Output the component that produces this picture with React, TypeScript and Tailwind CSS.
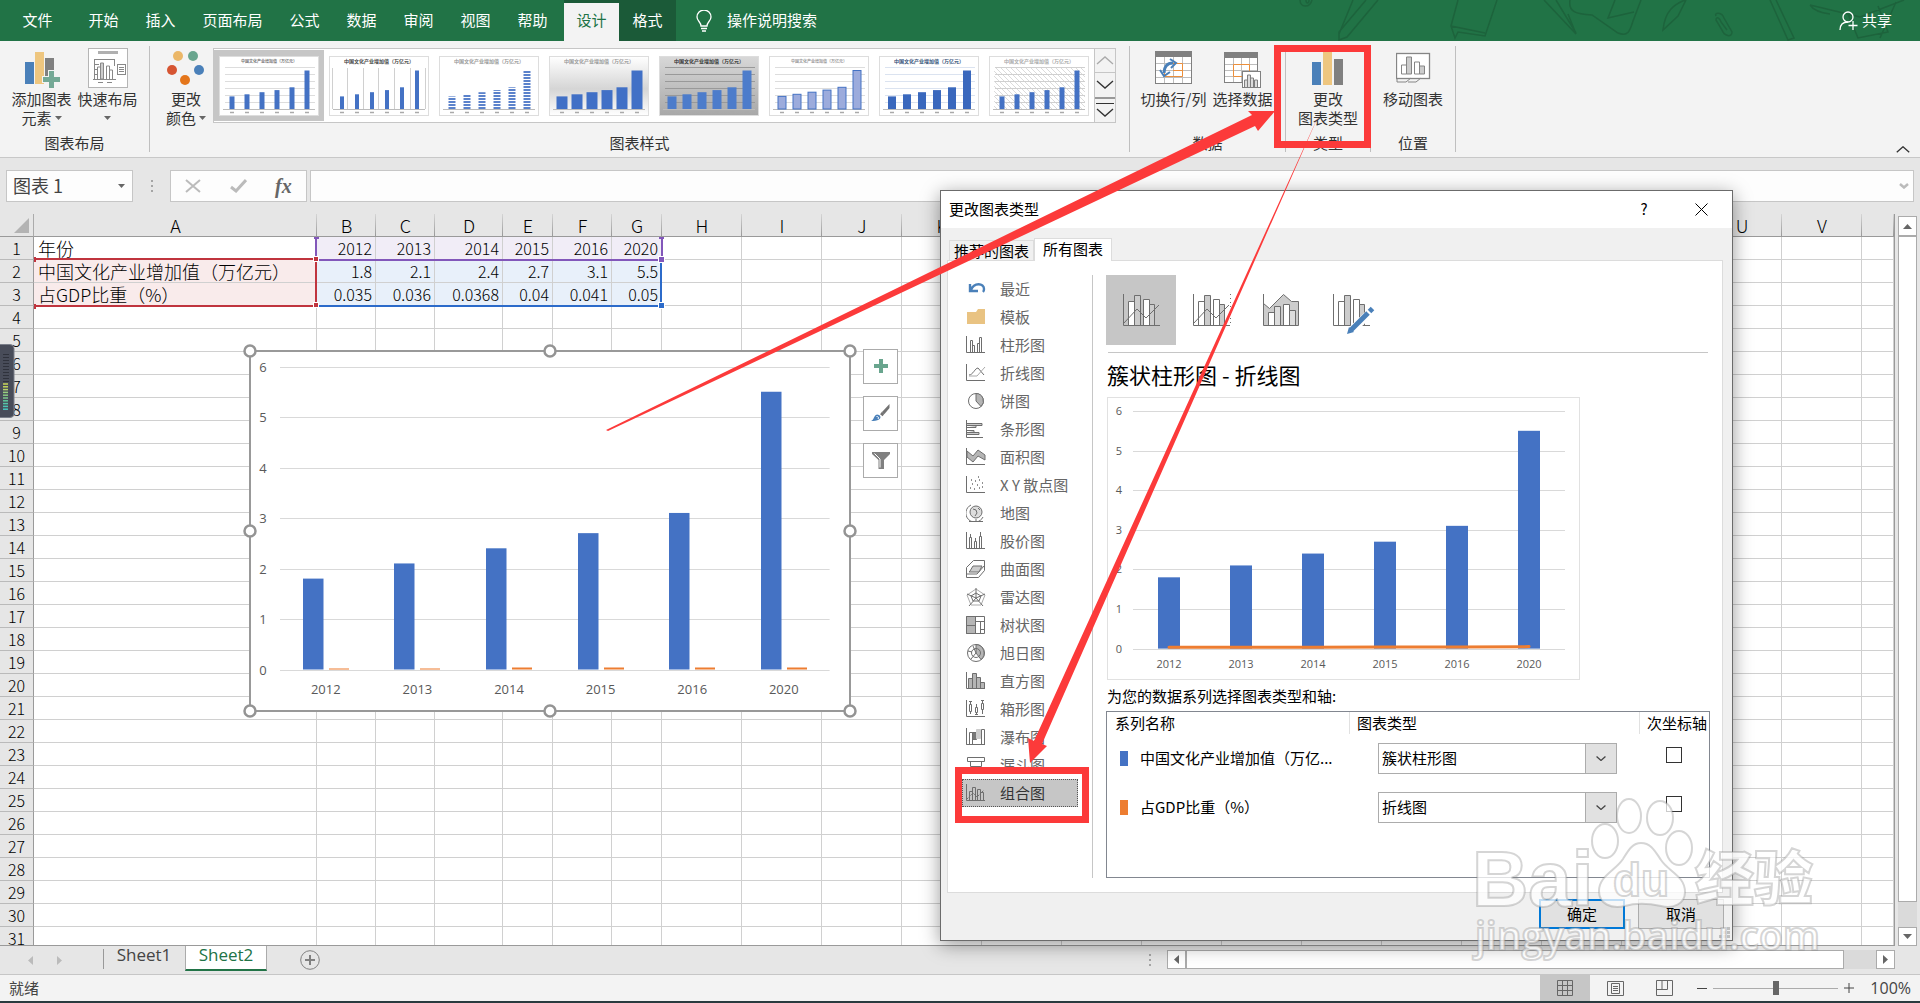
import { useState } from 'react';
import type { ReactNode } from 'react';

const YEARS = ['2012', '2013', '2014', '2015', '2016', '2020'];
const VALUES = [1.8, 2.1, 2.4, 2.7, 3.1, 5.5];
const RATIOS = [0.035, 0.036, 0.0368, 0.04, 0.041, 0.05];
const CHART_TITLE = '中国文化产业增加值（万亿元）';

const COLUMNS = [
  { name: 'A', width: 'w-[283px]' },
  { name: 'B', width: 'w-[59px]' },
  { name: 'C', width: 'w-[59px]' },
  { name: 'D', width: 'w-[68px]' },
  { name: 'E', width: 'w-[50px]' },
  { name: 'F', width: 'w-[59px]' },
  { name: 'G', width: 'w-[50px]' },
  ...'HIJKLMNOPQRSTUV'.split('').map((name) => ({ name, width: 'w-[80px]' })),
  { name: '', width: '' },
];

const ROWS: string[][] = [
  ['年份', ...YEARS],
  [CHART_TITLE, ...VALUES.map(String)],
  ['占GDP比重（%）', ...RATIOS.map(String)],
];

const MENU_TABS = ['开始', '插入', '页面布局', '公式', '数据', '审阅', '视图', '帮助'];

/* ---------- Iconos pequeños ---------- */

function Caret({ className = '' }: { className?: string }) {
  return (
    <svg className={className} width="7" height="4" viewBox="0 0 7 4">
      <path d="M0 0h7L3.5 4z" fill="#666" />
    </svg>
  );
}

function Chevron({ up = false, color = '#333', size = 18 }: { up?: boolean; color?: string; size?: number }) {
  return (
    <svg width={size} height={size / 2} viewBox="0 0 18 9" fill="none" stroke={color} strokeWidth={24 / size}>
      <path d={up ? 'M1 8l8-7 8 7' : 'M1 1l8 7 8-7'} />
    </svg>
  );
}

function AddElementIcon() {
  return (
    <svg width="36" height="40" viewBox="0 -2 36 40">
      <rect x="1" y="12" width="9" height="22" fill="#4a80b9" />
      <rect x="11" y="2" width="9" height="32" fill="#eec67f" />
      <rect x="21" y="8" width="9" height="18" fill="#808080" />
      <path d="M24 20h7v6h6v7h-6v6h-7v-6h-6v-7h6z" fill="#f3f3f3" />
      <path d="M25 21h5v6h6v5h-6v6h-5v-6h-6v-5h6z" fill="#74a996" />
    </svg>
  );
}

function QuickLayoutIcon() {
  return (
    <svg width="40" height="40" viewBox="0 0 40 40" fill="none" stroke="#888">
      <rect x="0.5" y="0.5" width="39" height="39" fill="#fff" stroke="#b5b5b5" />
      <rect x="10" y="3" width="20" height="3" fill="#b0b0b0" stroke="none" />
      <path d="M6.500 11v21M5 31.500h23M6 11.500h20M7 16.500h4M7 21.500h3M7 26.500h3M26.500 11v7M10 34.500h5M19 34.500h5" />
      <path d="M9.500 31v-12h3v12M18.500 31v-13h3v13M21.500 31v-9h3v9" fill="#fff" />
      <path d="M12.500 31v-16h3v16z" fill="#ccc" />
      <rect x="29.500" y="16.500" width="8" height="10" fill="#fff" />
      <path d="M31 19.500h5M31 21.500h5M31 23.500h5" />
    </svg>
  );
}

function PaletteIcon() {
  return (
    <svg width="38" height="40" viewBox="0 -2 38 40">
      <circle cx="11" cy="6" r="5" fill="#ebb768" />
      <circle cx="26" cy="6" r="5" fill="#69a58e" />
      <circle cx="5" cy="20" r="5" fill="#d65532" />
      <circle cx="32" cy="20" r="5" fill="#4a80b9" />
      <circle cx="18" cy="30" r="5" fill="#e4761b" />
    </svg>
  );
}

function SwitchRowColIcon() {
  return (
    <svg width="38" height="40" viewBox="0 -3 38 40" fill="none">
      <rect x="0.500" y="0.500" width="36" height="32" fill="#fff" stroke="#808080" />
      <rect width="37" height="6" fill="#808080" />
      <path d="M1 12.500h35M1 19.500h35M1 26.500h35M9.500 6v26M18.500 6v26M27.500 6v26" stroke="#bdbdbd" />
      <path d="M18 12.500h9.500v13H9.500v-6M18 19.500h9" stroke="#ec8f3b" />
      <path d="M9 22c0-6 3-10 9-10" stroke="#4a80b9" strokeWidth="3" />
      <path d="M15 8l6 4-5 5M5 19l4 6 6-4" stroke="#4a80b9" strokeWidth="2" />
    </svg>
  );
}

function SelectDataIcon() {
  return (
    <svg width="38" height="40" viewBox="0 -4 38 40" fill="none">
      <rect x="0.500" y="0.500" width="33" height="30" fill="#fff" stroke="#808080" />
      <rect width="34" height="6" fill="#808080" />
      <path d="M1 12.500h32M1 18.500h32M1 24.500h32M9.500 6v24M17.500 6v24M25.500 6v24" stroke="#bdbdbd" />
      <path d="M9.500 12.500h16v12h-16z" stroke="#ec8f3b" />
      <rect x="18.500" y="19.500" width="18" height="16" fill="#fff" stroke="#808080" />
      <path d="M20.500 35v-7h3v7M23.500 35v-12h3v12M26.500 35v-9h3v9M30.500 35v-7h3v7" stroke="#808080" fill="#ddd" />
    </svg>
  );
}

function ChangeTypeIcon() {
  return (
    <svg width="32" height="40" viewBox="0 -4 32 40">
      <rect x="0" y="10" width="9" height="23" fill="#4a80b9" />
      <rect x="11" y="0" width="9" height="33" fill="#eec67f" />
      <rect x="22" y="7" width="9" height="26" fill="#808080" />
    </svg>
  );
}

function MoveChartIcon() {
  return (
    <svg width="35" height="40" viewBox="0 -5 35 40" fill="#fff" stroke="#858585">
      <rect x="0.500" y="0.500" width="33" height="25" strokeWidth="1.300" />
      <path d="M5.500 21v-9h5v9zM18.500 21v-12h5v12z" />
      <path d="M10.500 21v-17h5v17zM23.500 21v-8h5v8z" fill="#ccc" />
      <path d="M1 25v4h9l5-4M12 29h8l5-4" fill="none" />
    </svg>
  );
}

/* ---------- Cinta de opciones ---------- */

function TitleBar() {
  return (
    <header className="relative flex h-[41px] shrink-0 items-stretch bg-[#217346] text-[15px] text-white">
      <svg className="absolute right-0 top-0" width="640" height="41" fill="none" stroke="#1d633c" strokeWidth="1.500">
        <path d="M20 0c0 8 10 8 12 0M26 0c0 4 3 4 3 0M86 0l-27 32 0 8 8-3 31-37M73 0l-14 34M178 0l-7 26 4 12 3-6 27 4 12-36M171 26l34 7M264 0l32 34-8-20M276 0l20 33M290 0c-2 12 6 14 22 15l26 18c10 4 12-2 15-12l8-21M335 0l-7 18 26-6M405 0c-10 4-20 10-22 30l15-14 8-16M436 16c-2-4 6-4 8 2l8 14c0 6-8 4-10-2l-6-10c0-4 4-2 5 2l6 8M490 0l18 40 6-2-18-38M530 5l50 12 44-17M530 5c4 6 12 8 20 9M568 14l10 24 30-6-10-26M600 38l16-36" />
      </svg>
      <nav className="relative flex items-stretch">
        <button className="w-[75px]">文件</button>
        {MENU_TABS.map((tab) => (
          <button key={tab} className={tab.length > 2 ? 'w-[87px]' : 'w-[57px]'}>
            {tab}
          </button>
        ))}
      </nav>
      <div className="relative ml-[3px] flex bg-[#1b5a38] pt-[3px]">
        <button className="w-[55px] bg-[#f3f3f3] pb-[3px] text-[#217346]">设计</button>
        <button className="w-[57px] pb-[3px]">格式</button>
      </div>
      <button className="relative flex items-center gap-[15px] pl-5">
        <svg width="16" height="22" viewBox="0 0 16 22" fill="none" stroke="#fff" strokeWidth="1.300">
          <path d="M5 16c0-4-4-5-4-9a7 7 0 0 1 14 0c0 4-4 5-4 9zM5 18.500h6M6 21h4" />
        </svg>
        操作说明搜索
      </button>
      <button className="relative ml-auto flex items-center gap-1 pr-7">
        <svg width="19" height="20" viewBox="0 0 19 20" fill="none" stroke="#fff" strokeWidth="1.300">
          <circle cx="9" cy="6" r="5" />
          <path d="M1 19c0-5 3-8 8-8M14 10v9M9.500 14.500h9" />
        </svg>
        共享
      </button>
    </header>
  );
}

type ThumbStyle = {
  title: string;
  size: number;
  bg: string;
  grid: string;
  fill: string;
  stroke?: string;
  bar: number;
  vertical?: boolean;
};

const THUMBS: ThumbStyle[] = [
  { title: '#777', size: 4, bg: '#fff', grid: '#ddd', fill: '#4472c4', bar: 5 },
  { title: '#444', size: 5, bg: '#fff', grid: '#d0d0d0', fill: '#4472c4', bar: 4, vertical: true },
  { title: '#999', size: 5, bg: '#fff', grid: 'none', fill: 'url(#stripes)', bar: 7 },
  { title: '#999', size: 5, bg: 'url(#haze)', grid: 'none', fill: '#4170c6', bar: 11 },
  { title: '#333', size: 5, bg: 'url(#shade)', grid: '#999', fill: '#4c7ccb', bar: 9 },
  { title: '#999', size: 4, bg: '#fff', grid: '#ddd', fill: '#9cabdc', stroke: '#4472c4', bar: 8 },
  { title: '#345078', size: 5, bg: '#fff', grid: '#dbe3f0', fill: '#3a68bd', bar: 8 },
  { title: '#aaa', size: 5, bg: '#fff', grid: '#d0d0d0', fill: '#4472c4', bar: 5 },
];

function Thumb({ style, hatched }: { style: ThumbStyle; hatched: boolean }) {
  return (
    <svg width="100" height="60" viewBox="0 0 100 60">
      <rect x="0.500" y="0.500" width="99" height="59" fill={style.bg} stroke="#ddd" />
      {hatched && <rect x="5" y="12" width="91" height="41" fill="url(#hatch)" />}
      {!style.vertical &&
        [11, 18, 25, 32, 39, 46].map((y) => <path key={y} d={`M6 ${y + 0.5}h90`} stroke={style.grid} />)}
      {style.vertical &&
        [3, 18, 34, 49, 65, 81, 96].map((x) => <path key={x} d={`M${x + 0.5} 12v41`} stroke={style.grid} />)}
      <path d="M4 53.500h92" stroke="#bbb" />
      <text x="50" y="7" textAnchor="middle" fontSize={style.size} fontWeight="bold" fill={style.title}>
        {CHART_TITLE}
      </text>
      {VALUES.map((value, i) => (
        <g key={YEARS[i]}>
          <rect
            x={13 + i * 15 - style.bar / 2}
            y={53 - value * 7}
            width={style.bar}
            height={value * 7}
            fill={style.fill}
            stroke={style.stroke}
          />
          <path d={`M${11 + i * 15} 56.500h4`} stroke="#aaa" strokeWidth="1.500" />
        </g>
      ))}
    </svg>
  );
}

function StyleGallery() {
  const [selected, setSelected] = useState(0);

  return (
    <div className="flex h-[75px] border border-[#c6c6c6] bg-white">
      <svg className="absolute" width="0" height="0">
        <defs>
          <pattern id="stripes" width="4" height="3" patternUnits="userSpaceOnUse">
            <rect width="4" height="2" fill="#5b82cb" />
          </pattern>
          <pattern id="hatch" width="5" height="5" patternUnits="userSpaceOnUse">
            <path d="M0 0l5 5" stroke="#ccc" strokeWidth="0.700" />
          </pattern>
          <linearGradient id="haze" x1="0" y1="0" x2="0" y2="1">
            <stop offset="0" stopColor="#fff" />
            <stop offset="0.550" stopColor="#d5d5d5" />
            <stop offset="1" stopColor="#fff" />
          </linearGradient>
          <linearGradient id="shade" x1="0" y1="0" x2="0" y2="1">
            <stop offset="0" stopColor="#d8d8d8" />
            <stop offset="1" stopColor="#a8a8a8" />
          </linearGradient>
        </defs>
      </svg>
      {THUMBS.map((style, i) => (
        <button
          key={i}
          onClick={() => setSelected(i)}
          aria-label={`样式 ${i + 1}`}
          className={`my-px flex w-[110px] items-center justify-center ${selected === i ? 'bg-[#c6c6c6]' : ''}`}
        >
          <Thumb style={style} hatched={i === 7} />
        </button>
      ))}
      <div className="flex w-[21px] flex-col border-l border-[#c6c6c6] bg-[#f3f3f3]">
        <button aria-label="上一行" className="flex flex-1 items-center justify-center border-b border-[#c6c6c6]">
          <Chevron up color="#aaa" />
        </button>
        <button aria-label="下一行" className="flex flex-1 items-center justify-center border-b-2 border-[#999]">
          <Chevron />
        </button>
        <button aria-label="其他" className="flex flex-1 flex-col items-center justify-center gap-1">
          <span className="h-px w-[18px] bg-[#333]" />
          <Chevron />
        </button>
      </div>
    </div>
  );
}

function RibbonButton({ icon, lines, caret, width }: { icon: ReactNode; lines: string[]; caret?: boolean; width: string }) {
  return (
    <button className={`flex flex-col items-center text-[15px] leading-[19px] text-[#333] ${width}`}>
      <span className="flex h-[43px] items-end pb-px">{icon}</span>
      {lines.map((line, i) => (
        <span key={i} className="flex h-[19px] items-center gap-[3px] whitespace-nowrap">
          {line}
          {caret && i === lines.length - 1 && <Caret />}
        </span>
      ))}
    </button>
  );
}

function RibbonGroup({ label, width, children }: { label: string; width: string; children: ReactNode }) {
  return (
    <section className={`flex flex-col border-r border-[#bfbfbf] ${width}`}>
      <div className="flex h-[90px] justify-center">{children}</div>
      <p className="text-center text-[15px] leading-[19px] text-[#333]">{label}</p>
    </section>
  );
}

function Ribbon() {
  return (
    <div className="flex h-[117px] shrink-0 justify-between border-b border-[#c8c8c8] bg-[#f3f3f3]">
      <div className="flex py-[5px]">
        <RibbonGroup label="图表布局" width="w-[150px]">
          <RibbonButton width="w-[66px]" icon={<AddElementIcon />} lines={['添加图表', '元素']} caret />
          <RibbonButton width="w-[66px]" icon={<QuickLayoutIcon />} lines={['快速布局', '']} caret />
        </RibbonGroup>
        <RibbonGroup label="图表样式" width="w-[980px]">
          <div className="flex flex-1 pl-[9px]">
            <RibbonButton width="w-[54px]" icon={<PaletteIcon />} lines={['更改', '颜色']} caret />
            <div className="pt-[2px]">
              <StyleGallery />
            </div>
          </div>
        </RibbonGroup>
        <RibbonGroup label="数据" width="w-[156px]">
          <RibbonButton width="w-[70px]" icon={<SwitchRowColIcon />} lines={['切换行/列']} />
          <RibbonButton width="w-[68px]" icon={<SelectDataIcon />} lines={['选择数据']} />
        </RibbonGroup>
        <RibbonGroup label="类型" width="w-[85px]">
          <RibbonButton width="w-[70px]" icon={<ChangeTypeIcon />} lines={['更改', '图表类型']} />
        </RibbonGroup>
        <RibbonGroup label="位置" width="w-[85px]">
          <RibbonButton width="w-[70px]" icon={<MoveChartIcon />} lines={['移动图表']} />
        </RibbonGroup>
      </div>
      <button aria-label="折叠功能区" className="flex items-end px-[10px] pb-1">
        <Chevron up size={14} />
      </button>
    </div>
  );
}

function FormulaBar() {
  return (
    <div className="flex h-[56px] shrink-0 items-start bg-[#e6e6e6] pl-[6px] pr-[6px] pt-3">
      <div className="relative">
        <input
          aria-label="名称框"
          defaultValue="图表 1"
          className="h-[32px] w-[127px] border border-[#c6c6c6] bg-[#fdfdfd] pb-[2px] pl-[6px] text-lg text-[#444]"
        />
        <Caret className="absolute right-2 top-[14px]" />
      </div>
      <div className="flex h-[32px] w-[37px] flex-col items-center justify-center gap-[3px]">
        <span className="size-[2px] bg-[#a5a5a5]" />
        <span className="size-[2px] bg-[#a5a5a5]" />
        <span className="size-[2px] bg-[#a5a5a5]" />
      </div>
      <div className="flex h-[32px] w-[137px] items-center justify-around border border-[#c6c6c6] bg-[#fdfdfd]">
        <button aria-label="取消输入">
          <svg width="16" height="14" viewBox="0 0 16 14" fill="none" stroke="#bbb" strokeWidth="2">
            <path d="M1 1l14 12M15 1L1 13" />
          </svg>
        </button>
        <button aria-label="输入">
          <svg width="17" height="14" viewBox="0 0 17 14" fill="none" stroke="#bbb" strokeWidth="3">
            <path d="M1 8l5 4L16 1" />
          </svg>
        </button>
        <button className="font-['Liberation_Serif',serif] text-xl font-bold italic leading-6 text-[#666]">fx</button>
      </div>
      <div className="relative ml-[3px] flex-1">
        <input aria-label="编辑栏" className="h-[32px] w-full border border-[#c6c6c6] bg-[#fdfdfd] px-2" />
        <svg className="absolute right-[5px] top-[13px]" width="10" height="6" viewBox="0 0 10 6" fill="none" stroke="#bbb" strokeWidth="2.500">
          <path d="M1 1l4 3.500L9 1" />
        </svg>
      </div>
    </div>
  );
}

/* ---------- Hoja ---------- */

function cellTint(row: number, col: number) {
  if (row === 0 && col >= 1 && col <= 6) return 'bg-[#f1edf7]';
  if ((row === 1 || row === 2) && col === 0) return 'bg-[#f9ebeb]';
  if ((row === 1 || row === 2) && col <= 6) return 'bg-[#e8f0fa]';
  return '';
}

function SheetGrid() {
  return (
    <table className="w-full table-fixed border-separate border-spacing-0 text-black">
      <thead>
        <tr className="h-[23px] bg-[#e6e6e6]">
          <th className="w-[34px] border-b border-r border-[#ababab] border-b-[#9a9a9a] p-0">
            <svg className="ml-auto mr-1" width="15" height="15" viewBox="0 0 15 15">
              <path d="M15 0v15H0z" fill="#b3b3b3" />
            </svg>
          </th>
          {COLUMNS.map((col, i) => (
            <th
              key={i}
              className={`border-b border-b-[#9a9a9a] bg-[linear-gradient(#d5d5d5,#999)] bg-[length:1px_100%] bg-right bg-no-repeat p-0 text-lg font-light leading-[22px] ${col.width}`}
            >
              {col.name}
            </th>
          ))}
        </tr>
      </thead>
      <tbody>
        {Array.from({ length: 31 }, (_, row) => (
          <tr key={row} className="h-[23px]">
            <th className="border-b border-r border-b-[#bababa] border-r-[#9a9a9a] bg-[#e6e6e6] p-0 text-base font-light leading-[22px]">
              {row + 1}
            </th>
            {COLUMNS.map((_col, col) => (
              <td
                key={col}
                className={`overflow-visible whitespace-nowrap border-b border-r border-[#d0d0d0] p-0 leading-[22px] ${
                  col === 0 ? 'pl-1 text-lg' : 'pr-[3px] text-right text-base'
                } ${cellTint(row, col)}`}
              >
                <span className="font-light">{ROWS[row]?.[col] ?? ''}</span>
              </td>
            ))}
          </tr>
        ))}
      </tbody>
    </table>
  );
}

// Marcos de color de los rangos que usa el gráfico
function RangeFrames() {
  return (
    <svg className="pointer-events-none absolute left-0 top-0" width="700" height="110">
      <g fill="none" strokeWidth="2">
        <path d="M316 23v22M317 46h344M662 23v22" stroke="#8257ba" />
        <path d="M34 45h282v47H34" stroke="#c0343e" />
        <path d="M318 92h343V48" stroke="#2c6bca" />
      </g>
      <g stroke="#fff">
        <rect x="313.500" y="42.500" width="5" height="5" fill="#c0343e" />
        <rect x="313.500" y="88.500" width="5" height="5" fill="#c0343e" />
        <rect x="658.500" y="42.500" width="6" height="6" fill="#8257ba" />
        <rect x="658.500" y="88.500" width="6" height="6" fill="#2c6bca" />
      </g>
      <path d="M34 43h2v5h-2zM34 90h2v5h-2z" fill="#c0343e" />
      <path d="M314 23h5v2h-5zM659 23h5v2h-5z" fill="#8257ba" />
    </svg>
  );
}

type PlotProps = {
  left: number;
  top: number;
  step: number;
  slot: number;
  barWidth: number;
  barOffset: number;
  fontSize: number;
  labelX: number;
  labelGap: number;
  combo?: boolean;
};

function Plot({ left, top, step, slot, barWidth, barOffset, fontSize, labelX, labelGap, combo }: PlotProps) {
  const base = top + step * 6;
  const center = (i: number) => left + slot * (i + 0.5);

  return (
    <g>
      {[0, 1, 2, 3, 4, 5, 6].map((n) => {
        const y = Math.round(base - n * step) + 0.5;
        return (
          <g key={n}>
            <path d={`M${left} ${y}h${slot * 6}`} stroke="#d9d9d9" />
            <text x={labelX} y={y + fontSize * 0.33} textAnchor="middle" fontSize={fontSize} fill="#595959">
              {n}
            </text>
          </g>
        );
      })}
      {VALUES.map((value, i) => (
        <g key={YEARS[i]}>
          <rect x={Math.round(center(i) + barOffset)} y={base - value * step} width={barWidth} height={value * step} fill="#4472c4" />
          {!combo && <rect x={Math.round(center(i) + 3)} y={base - (i < 2 ? 1 : 2)} width="20" height={i < 2 ? 1 : 2} fill="#ed7d31" />}
          <text x={center(i)} y={base + labelGap} textAnchor="middle" fontSize={fontSize} fill="#595959">
            {YEARS[i]}
          </text>
        </g>
      ))}
      {combo && (
        <polyline
          points={RATIOS.map((ratio, i) => `${center(i)},${base - ratio * step}`).join(' ')}
          fill="none"
          stroke="#ed7d31"
          strokeWidth="3"
          strokeLinecap="round"
        />
      )}
    </g>
  );
}

function SheetChart() {
  const handles = [
    [7, 7], [307, 7], [607, 7],
    [7, 187], [607, 187],
    [7, 367], [307, 367], [607, 367],
  ];

  return (
    <div className="absolute left-[243px] top-[130px] flex items-start gap-[6px] font-['Open_Sans','Noto_Sans_CJK_SC',sans-serif]">
      <svg width="614" height="374" viewBox="0 0 614 374">
        <rect x="7" y="7" width="600" height="360" fill="#fff" stroke="#999" strokeWidth="2" />
        <Plot left={37} top={22.5} step={50.5} slot={91.6} barWidth={20.5} barOffset={-23} fontSize={13} labelX={20} labelGap={24} />
        {handles.map(([x, y]) => (
          <circle key={`${x}-${y}`} cx={x} cy={y} r="5.500" fill="#fff" stroke="#949494" strokeWidth="2.500" />
        ))}
      </svg>
      <div className="flex flex-col gap-3 pt-[5px]">
        <button aria-label="图表元素" className="flex size-[35px] items-center justify-center border border-[#ababab] bg-white pb-px">
          <svg width="14" height="14" viewBox="0 0 14 14">
            <path d="M5 0h4v5h5v4H9v5H5V9H0V5h5z" fill="#69a58e" />
          </svg>
        </button>
        <button aria-label="图表样式" className="flex size-[35px] items-center justify-center border border-[#ababab] bg-white pb-px">
          <svg width="19" height="18" viewBox="0 0 19 18">
            <path d="M18.500 0v4l-5 6-2.500-2z" fill="#737373" />
            <path d="M10 9l2.500 2" stroke="#737373" strokeWidth="3" />
            <path d="M0 17c3-1 3-6 6-6.500 3 0 5 3 2 5-2 1.500-5 1.500-8 1.500z" fill="#4a80b9" />
            <path d="M5.500 12.500c2 0 2.500 1 1.500 2.500" stroke="#fff" fill="none" />
          </svg>
        </button>
        <button aria-label="图表筛选器" className="flex size-[35px] items-center justify-center border border-[#ababab] bg-white pb-px">
          <svg width="18" height="17" viewBox="0 0 18 17">
            <path d="M0 0h18v2l-6 6v9H6.500V8L0 2z" fill="#808080" />
            <path d="M2.500 1.500L8 7v8.500" stroke="#fff" fill="none" />
          </svg>
        </button>
      </div>
    </div>
  );
}

const scrollButton = 'flex items-center justify-center border border-[#ababab] bg-white';

function VerticalScroll() {
  return (
    <div className="flex w-[25px] shrink-0 flex-col bg-[#e6e6e6] pl-[3px] pr-[3px] pt-[2px]">
      <button aria-label="向上滚动" className={`h-[20px] ${scrollButton}`}>
        <svg width="9" height="5"><path d="M0 5l4.500-5L9 5z" fill="#666" /></svg>
      </button>
      <div className="flex-1 bg-[#dadada] pb-[25px]">
        <div className="h-full border border-[#ababab] bg-white" />
      </div>
      <button aria-label="向下滚动" className={`h-[19px] ${scrollButton}`}>
        <svg width="9" height="5"><path d="M0 0h9L4.500 5z" fill="#666" /></svg>
      </button>
    </div>
  );
}

function SheetTabs() {
  return (
    <div className="flex h-[28px] shrink-0 items-start bg-[#e6e6e6] font-['Open_Sans',sans-serif] text-[17px]">
      <div className="flex h-[28px] w-[103px] items-center gap-6 pl-7">
        <button aria-label="上一个工作表"><svg width="5" height="9"><path d="M5 0v9L0 4.500z" fill="#bbb" /></svg></button>
        <button aria-label="下一个工作表"><svg width="5" height="9"><path d="M0 0v9l5-4.500z" fill="#bbb" /></svg></button>
      </div>
      <span className="mt-[3px] h-[20px] w-px bg-[#999]" />
      <button className="h-[22px] w-[81px] pb-1 pr-px leading-[18px] text-[#444]">Sheet1</button>
      <button className="h-[25px] w-[82px] border-b-2 border-x border-x-[#ababab] border-b-[#217346] bg-white pb-[5px] leading-[18px] text-[#217346]">
        Sheet2
      </button>
      <button aria-label="新工作表" className="ml-[33px] mt-1">
        <svg width="20" height="20" viewBox="0 0 20 20" fill="none" stroke="#808080">
          <circle cx="10" cy="10" r="9.300" />
          <path d="M10 5v10M5 10h10" strokeWidth="2" />
        </svg>
      </button>
      <div className="ml-auto mr-[25px] mt-1 flex w-[746px] items-center">
        <span className="mr-4 flex flex-col gap-[3px]">
          <span className="size-[2px] bg-[#a5a5a5]" />
          <span className="size-[2px] bg-[#a5a5a5]" />
          <span className="size-[2px] bg-[#a5a5a5]" />
        </span>
        <button aria-label="向左滚动" className={`size-[19px] ${scrollButton}`}>
          <svg width="5" height="9"><path d="M5 0v9L0 4.500z" fill="#666" /></svg>
        </button>
        <div className="flex-1 bg-[#dadada] pr-[32px]">
          <div className="h-[19px] border border-[#ababab] bg-white" />
        </div>
        <button aria-label="向右滚动" className={`size-[19px] ${scrollButton}`}>
          <svg width="5" height="9"><path d="M0 0v9l5-4.500z" fill="#666" /></svg>
        </button>
      </div>
    </div>
  );
}

function StatusBar() {
  const [zoom, setZoom] = useState(50);

  return (
    <footer className="flex h-[29px] shrink-0 items-stretch border-b-2 border-t border-b-[#2a3b3f] border-t-[#c6c6c6] bg-[#f3f3f3] pl-[9px] pr-[9px] text-[15px] text-[#444]">
      <p className="self-center">就绪</p>
      <div className="ml-auto flex items-stretch">
        <button aria-label="普通" className="flex w-[50px] items-center justify-center bg-[#c6c6c6]">
          <svg width="16" height="16" viewBox="0 0 16 16" fill="none" stroke="#666">
            <path d="M.5.5h15v15H.5zM5.500 0v16M10.500 0v16M0 5.500h16M0 10.500h16" />
          </svg>
        </button>
        <button aria-label="页面布局视图" className="flex w-[50px] items-center justify-center">
          <svg width="17" height="15" viewBox="0 0 17 15" fill="none" stroke="#666">
            <path d="M.5.500h16v14H.5zM4.500 2.500h8v10h-8zM6 5.500h5M6 7.500h5M6 9.500h5" />
          </svg>
        </button>
        <button aria-label="分页预览" className="flex w-[49px] items-center justify-center">
          <svg width="17" height="16" viewBox="0 0 17 16" fill="none" stroke="#666">
            <path d="M.5.500h16v15H.5zM.5 9.500h11M6 1v8M11.500 1v8.500" />
          </svg>
        </button>
      </div>
      <div className="flex items-center">
        <button aria-label="缩小" className="ml-2 h-px w-[10px] bg-[#444]" />
        <input
          type="range"
          aria-label="缩放"
          value={zoom}
          onChange={(e) => setZoom(Number(e.target.value))}
          className="mx-[6px] h-px w-[125px] appearance-none bg-[#ababab] [&::-webkit-slider-thumb]:h-[14px] [&::-webkit-slider-thumb]:w-[6px] [&::-webkit-slider-thumb]:appearance-none [&::-webkit-slider-thumb]:bg-[#666]"
        />
        <button aria-label="放大">
          <svg width="10" height="10"><path d="M5 0v10M0 5h10" stroke="#444" /></svg>
        </button>
      </div>
      <p className="ml-4 self-center font-['Open_Sans',sans-serif] text-base">100%</p>
    </footer>
  );
}

/* ---------- Cuadro de diálogo ---------- */

const axis = <path d="M.5 0v16.500H19" />;

const CHART_TYPES: { name: string; icon: ReactNode }[] = [
  {
    name: '最近',
    icon: (
      <g stroke="#4a80b9" strokeWidth="2.400">
        <path d="M5 10c3-8 13-7 13-1 0 1 0 2-1 3M4 4v7h8" />
      </g>
    ),
  },
  {
    name: '模板',
    icon: <path d="M1 4h9l2-3h7v15H1z" fill="#e9c382" stroke="none" />,
  },
  { name: '柱形图', icon: <>{axis}<path d="M4.500 16V4.500h2V16M6.500 9.500h2V16M11.500 16V7.500h2V16M13.500 8V1.500h2V16" /></> },
  { name: '折线图', icon: <>{axis}<path d="M3 11c4 0 6-7 9-7l6 7" /><path d="M3 12h8l8-9" stroke="#aaa" /></> },
  {
    name: '饼图',
    icon: <><circle cx="10" cy="9" r="7.500" /><path d="M10 9V1.500a7.500 7.500 0 0 1 5 13z" fill="#b5b5b5" /></>,
  },
  { name: '条形图', icon: <><path d="M.5 0v17.500H17" /><path d="M1 3.500h15v2H1M10 5.500v2H1M1 10.500h7v2M1 12.500h12v2H1" fill="#ccc" /></> },
  { name: '面积图', icon: <>{axis}<path d="M1 3l6 5 5-6 7 5v5l-7-4-5 6-6-5z" fill="#b5b5b5" /></> },
  {
    name: 'X Y 散点图',
    icon: <>{axis}<path d="M4 12h1M6 8h1M8 13h1M9 5h1M11 9h1M13 12h1M13 4h1M16 7h1M16 11h1M5 4h1M12 1h1" strokeWidth="1.500" /></>,
  },
  {
    name: '地图',
    icon: <><circle cx="10" cy="8" r="6" fill="#ddd" /><path d="M5 1a9 9 0 1 0 12 12M10 15v3M3 17.500h14M7 5l3 1 1 3-2 3M12 4l2 2" /></>,
  },
  { name: '股价图', icon: <>{axis}<path d="M3.500 16V5.500h2V16M8.500 16v-6.500h2V16M13.500 16V4.500h2V16M4.500 5V2M9.500 9V6M14.500 4V0" /></> },
  {
    name: '曲面图',
    icon: <><path d="M.5 7.500l7-7h11v10l-6 7H.5zM1 14h10l7-8" /><path d="M4 11l3-5h9l-3 6H3z" fill="#ccc" /></>,
  },
  {
    name: '雷达图',
    icon: <><path d="M10 1l9 6-4 10H5L1 7z" stroke="#aaa" /><path d="M10 0v10L1 6M10 10l9-4M10 10L3 18M10 10l7 8M5 8l5-3 5 3-2 5H7z" /></>,
  },
  {
    name: '树状图',
    icon: <><path d="M.5.5h9v17h-9z" fill="#b5b5b5" /><path d="M.5.500h18v17H.500zM.5 9.500h9M9.500 5.500h9M14.500 5.500v12M14.500 13.500h4" /></>,
  },
  {
    name: '旭日图',
    icon: <><circle cx="10" cy="9" r="8.500" /><path d="M10 9V.5a8.500 8.500 0 0 1 5 15z" fill="#b5b5b5" /><circle cx="10" cy="9" r="4.500" /><path d="M2 7l4 1M5 15l5-6-3-7" /></>,
  },
  { name: '直方图', icon: <>{axis}<path d="M2.500 16V6.500h4V16M6.500 16V1.500h4V16M10.500 16V5.500h4V16M14.500 16v-5.500h4V16" fill="#b5b5b5" /></> },
  {
    name: '箱形图',
    icon: <>{axis}<path d="M3.500 4.500h2v7h-2zM9.500 7.500h2v5h-2zM15.500 3.500h2v6h-2zM4.500 1v3M4.500 12v2M10.500 4v3M10.500 13v2M16.500 0v3M16.500 10v4M3 1.500h3M9 14.500h3M15 .500h3" /></>,
  },
  {
    name: '瀑布图',
    icon: <>{axis}<path d="M3.500 16V4.500h3V16M15.500 16V1.500h3V16M.5 16.500h18" /><path d="M6.500 4.500h4v7h-4z" fill="#777" /><path d="M10.500 1.500h4v9h-4z" fill="#ccc" stroke="#ccc" /></>,
  },
  { name: '漏斗图', icon: <path d="M1.500 1.500h17v4h-17zM4.500 5.500h11v5h-11zM7.500 10.500h5v5h-5z" /> },
  {
    name: '组合图',
    icon: <>{axis}<path d="M3.500 16V7.500h3V16M6.500 16V3.500h3V16M11.500 16V5.500h3V16M14.500 16V8.500h3V16" /><path d="M1 15l6-6 4 4 7-7" strokeDasharray="2 1" /></>,
  },
];

function ComboBars() {
  return (
    <>
      <path d="M.5 0v31.500H37" />
      <path d="M5.500 31V7.500h6V31M20.500 31V5.500h6V31" fill="#fff" />
      <path d="M11.500 31V1.500h6V31M26.500 31V10.500h5V31" fill="#ccc" />
    </>
  );
}

const SUBTYPES: { name: string; icon: ReactNode }[] = [
  { name: '簇状柱形图 - 折线图', icon: <><ComboBars /><path d="M1 29l13-14 9 9 13-13" /></> },
  {
    name: '簇状柱形图 - 次坐标轴上的折线图',
    icon: <><ComboBars /><path d="M1 29l13-14 9 9 13-13" /><path d="M37.500 0v32" strokeDasharray="1 3" /></>,
  },
  {
    name: '堆积面积图 - 簇状柱形图',
    icon: (
      <>
        <path d="M.5 0v31.500h35V7.500h-7l-8-7-14 14-6-5" fill="#ccc" />
        <path d="M5.500 31V18.500h6V31M20.500 31V10.500h6V31" fill="#fff" />
        <path d="M11.500 31V12.500h6V31M26.500 31V16.500h6V31" fill="#ddd" />
      </>
    ),
  },
  {
    name: '自定义组合',
    icon: (
      <>
        <ComboBars />
        <path d="M18 37l20-19" stroke="#fff" strokeWidth="8" />
        <path d="M18 36l17-17M36.500 17.500l3-3" stroke="#4a80b9" strokeWidth="5" />
        <path d="M14 40l2-7 5 5z" fill="#4a80b9" stroke="none" />
      </>
    ),
  },
];

function SeriesRow({ color, name, type }: { color: string; name: string; type: string }) {
  return (
    <tr className="h-[49px]">
      <td className="p-0 pl-[13px]">
        <div className="flex items-center gap-3">
          <span className={`h-[15px] w-2 ${color}`} />
          {name}
        </div>
      </td>
      <td className="p-0 pl-7">
        <div className="relative h-[31px] w-[239px]">
          <select aria-label={`${name} 图表类型`} defaultValue={type} className="h-full w-full appearance-none border border-[#acacac] bg-white pl-[3px]">
            <option>簇状柱形图</option>
            <option>折线图</option>
          </select>
          <span className="pointer-events-none absolute inset-y-0 right-0 flex w-[32px] items-center justify-center border border-[#acacac] bg-[#e1e1e1]">
            <Chevron size={10} color="#444" />
          </span>
        </div>
      </td>
      <td className="p-0 pb-[7px] pl-[26px]">
        <input type="checkbox" aria-label={`${name} 次坐标轴`} className="block size-4 appearance-none border border-[#333] bg-white checked:bg-[#333]" />
      </td>
    </tr>
  );
}

function ChartTypeDialog() {
  const [active, setActive] = useState('组合图');

  return (
    <div
      role="dialog"
      aria-labelledby="dialog-title"
      className="absolute left-[940px] top-[190px] flex w-[793px] flex-col border border-[#6b6b6b] bg-[#f0f0f0] text-[15px] text-black shadow-[0_4px_18px_rgba(0,0,0,0.4)]"
    >
      <div className="flex h-[37px] items-stretch bg-white pl-2 pr-[2px]">
        <h2 id="dialog-title" className="flex-1 self-center">更改图表类型</h2>
        <button className="w-[56px]">?</button>
        <button aria-label="关闭" className="flex w-[58px] items-center justify-center">
          <svg width="13" height="13"><path d="M.5.5l12 12M12.500.5l-12 12" stroke="#000" /></svg>
        </button>
      </div>

      <div className="flex items-end pl-2 pt-[10px]">
        <button className="h-[20px] w-[85px] whitespace-nowrap border border-b-0 border-[#dcdcdc] leading-[20px]">推荐的图表</button>
        <button className="relative -mb-px h-[23px] w-[78px] border border-b-0 border-[#dcdcdc] bg-white pb-[2px] leading-[20px]">所有图表</button>
      </div>

      <div className="ml-[6px] mr-[9px] flex border border-[#dcdcdc] bg-white py-[14px] pl-[14px] pr-3">
        <ul className="w-[131px] border-r border-[#c6c6c6] pr-[14px]">
          {CHART_TYPES.map(({ name, icon }) => (
            <li key={name}>
              <button
                onClick={() => setActive(name)}
                className={`flex h-7 w-full items-center gap-[14px] whitespace-nowrap border pl-[3px] text-left ${
                  active === name ? 'border-dotted border-[#555] bg-[#c6c6c6] text-[#333]' : 'border-transparent text-[#666]'
                }`}
              >
                <svg className="shrink-0" width="20" height="18" viewBox="0 0 20 18" fill="none" stroke="#6e6e6e">
                  {icon}
                </svg>
                {name}
              </button>
            </li>
          ))}
        </ul>

        <div className="ml-[13px] flex-1">
          <div className="flex">
            {SUBTYPES.map(({ name, icon }, i) => (
              <button
                key={name}
                aria-label={name}
                className={`flex size-[70px] items-center justify-center ${i === 0 ? 'bg-[#c6c6c6]' : ''}`}
              >
                <svg className="overflow-visible" width="37" height="32" viewBox="0 0 37 32" fill="none" stroke="#6e6e6e">
                  {icon}
                </svg>
              </button>
            ))}
          </div>
          <hr className="ml-[2px] mr-[2px] mt-[7px] border-[#c6c6c6]" />
          <h3 className="pb-[3px] pl-px pt-px text-[22px] leading-[40px]">簇状柱形图 - 折线图</h3>
          <svg className="ml-px block font-['Open_Sans',sans-serif]" width="474" height="283" viewBox="0 0 474 283">
            <rect x="0.500" y="0.500" width="472" height="282" fill="#fff" stroke="#e1e1e1" />
            <Plot left={26} top={14} step={39.6} slot={72} barWidth={22} barOffset={-11} fontSize={11} labelX={12} labelGap={19} combo />
          </svg>
          <p className="pl-px leading-[31px]">为您的数据系列选择图表类型和轴:</p>
          <div className="h-[167px] border border-[#828790]">
            <table className="w-full table-fixed border-separate border-spacing-0">
              <thead>
                <tr className="h-[22px] text-left leading-[20px]">
                  <th className="w-[243px] border-r border-[#e1e1e1] p-0 pl-2 font-normal">系列名称</th>
                  <th className="border-r border-[#e1e1e1] p-0 pl-[7px] font-normal">图表类型</th>
                  <th className="w-[69px] whitespace-nowrap p-0 pl-[7px] font-normal">次坐标轴</th>
                </tr>
              </thead>
              <tbody>
                <SeriesRow color="bg-[#4472c4]" name="中国文化产业增加值（万亿..." type="簇状柱形图" />
                <SeriesRow color="bg-[#ed7d31]" name="占GDP比重（%）" type="折线图" />
              </tbody>
            </table>
          </div>
        </div>
      </div>

      <div className="flex justify-end gap-[13px] pb-[11px] pr-2 pt-[6px]">
        <button className="h-[30px] w-[86px] border-2 border-[#0078d7] bg-[#e1e1e1]">确定</button>
        <button className="h-[30px] w-[86px] border border-[#adadad] bg-[#e1e1e1]">取消</button>
      </div>
      <svg className="absolute bottom-[2px] right-[2px]" width="11" height="11" fill="#bfbfbf">
        <path d="M8 0h3v3H8zM4 4h3v3H4zM8 4h3v3H8zM0 8h3v3H0zM4 8h3v3H4zM8 8h3v3H8z" />
      </svg>
    </div>
  );
}

/* ---------- Anotaciones, medidor y marca de agua ---------- */

function LevelMeter() {
  return (
    <svg className="absolute left-0 top-[344px]" width="15" height="75">
      <rect x="-6" y="0.500" width="20" height="73" rx="4" fill="#484c59" stroke="#7b7f8a" />
      {Array.from({ length: 10 }, (_, i) => (
        <path key={i} d={`M3 ${10.5 + i * 3}h6`} stroke="#2f323c" />
      ))}
      {['#c9d65a', '#c4d65a', '#b5d36a', '#97cf7e', '#8acb82', '#7bc98c', '#5fc79c', '#55c6a8', '#4dc6b4', '#48c7c0'].map((color, i) => (
        <path key={color} d={`M3 ${40 + i * 2.8}h5`} stroke={color} strokeWidth="1.500" />
      ))}
    </svg>
  );
}

function Annotations() {
  return (
    <svg className="pointer-events-none absolute left-0 top-0 h-full w-full">
      <g fill="none" stroke="#fc3a3a" strokeWidth="7">
        <rect x="1277.500" y="48.500" width="90" height="96" />
        <rect x="958.500" y="770.500" width="127" height="49" />
      </g>
      <g fill="#fc3a3a">
        <path d="M606 430L1252 115l-4-4h27l-17 20-3-5L608 431z" />
        <path d="M1321 110L1034 741l-6-3 2 25 17-17-5-2z" />
      </g>
    </svg>
  );
}

function Watermark() {
  return (
    <svg className="pointer-events-none absolute left-0 top-0 h-full w-full" fill="#fff" fillOpacity="0.750" stroke="#888" strokeOpacity="0.350" strokeWidth="2">
      <text x="1472" y="906" fontSize="78" fontWeight="bold" className="font-['Liberation_Sans',sans-serif]">
        Bai
      </text>
      <ellipse cx="1605" cy="841" rx="13" ry="17" />
      <ellipse cx="1629" cy="816" rx="12" ry="17" />
      <ellipse cx="1660" cy="818" rx="13" ry="17" />
      <ellipse cx="1679" cy="848" rx="13" ry="17" />
      <path d="M1641 843c10 0 14 8 20 17 8 12 24 16 24 32 0 12-12 17-24 14-14-3-26-3-36 0-14 3-26-2-26-15 0-15 16-20 24-32 5-8 9-16 18-16z" />
      <text x="1613" y="896" fontSize="46" fontWeight="bold" className="font-['Liberation_Sans',sans-serif]">
        du
      </text>
      <text x="1695" y="900" fontSize="59" fontWeight="900" className="font-['Noto_Sans_CJK_SC',sans-serif]">
        经验
      </text>
      <text x="1475" y="950" fontSize="39" fontWeight="600" className="font-['Open_Sans',sans-serif]">
        jingyan.baidu.com
      </text>
    </svg>
  );
}

export default function App() {
  return (
    <div className="relative flex h-screen flex-col overflow-hidden bg-[#e6e6e6] font-['Noto_Sans_CJK_SC',sans-serif]">
      <TitleBar />
      <Ribbon />
      <FormulaBar />
      <main className="flex min-h-0 flex-1">
        <div className="relative min-w-0 flex-1 overflow-hidden border-b border-r border-[#9a9a9a] bg-white">
          <SheetGrid />
          <RangeFrames />
          <SheetChart />
        </div>
        <VerticalScroll />
      </main>
      <SheetTabs />
      <StatusBar />
      <LevelMeter />
      <ChartTypeDialog />
      <Annotations />
      <Watermark />
    </div>
  );
}
